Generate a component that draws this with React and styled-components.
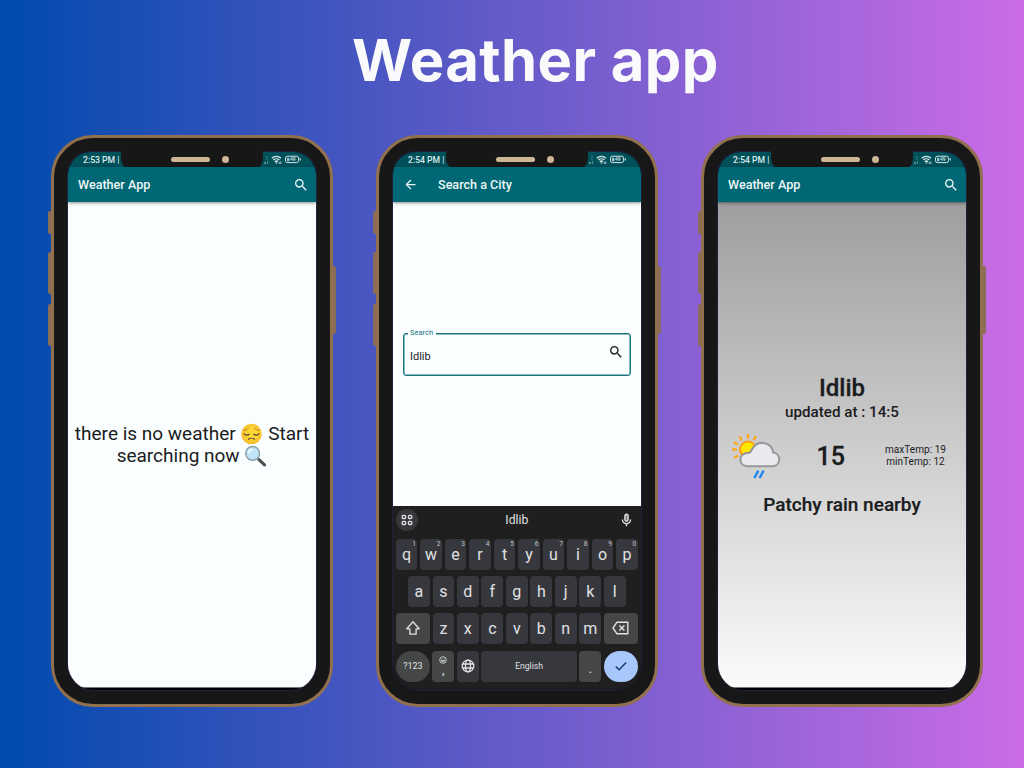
import React from "react";
import styled, { createGlobalStyle, css } from "styled-components";

const Global = createGlobalStyle`
  * { box-sizing: border-box; }
  body { margin: 0; }
`;

const Poster = styled.main`
  width: 1024px;
  height: 768px;
  overflow: hidden;
  background: linear-gradient(90deg, #004aad, #cb6ce6);
  font-family: Roboto, "Liberation Sans", sans-serif;
  color: #1b1c1d;
`;

const Title = styled.h1`
  margin: 0;
  height: 135px;
  padding: 24px 0 0 352px;
  font: 700 58px/73px Inter, "Liberation Sans", sans-serif;
  letter-spacing: 0.4px;
  color: #fafafc;
  white-space: nowrap;
`;

const Row = styled.div`
  display: flex;
  gap: 43px;
  padding-left: 51px;
`;

const Body = styled.section`
  position: relative;
  flex: none;
  width: 282px;
  height: 572px;
  padding: 14px;
  border: 3px solid #91704e;
  border-radius: 42px;
  background: #171717;
`;

const SideButton = styled.span`
  position: absolute;
  top: ${(p) => p.$top}px;
  ${(p) => p.$side}: -6px;
  width: 3px;
  height: ${(p) => p.$height}px;
  background: #8a6c58;
  border-radius: ${(p) => (p.$side === "left" ? "2px 0 0 2px" : "0 2px 2px 0")};
`;

const Screen = styled.div`
  display: flex;
  flex-direction: column;
  width: 248px;
  height: 538px;
  border-radius: 23px 23px 26px 26px;
  overflow: hidden;
  background: #000;
  box-shadow: 0 0 0 1px #221f3c;
`;

const Notch = styled.div`
  position: absolute;
  top: 13px;
  left: 67px;
  width: 142px;
  height: 20px;
  border-radius: 0 0 13px 13px;
  background: #171717;
  display: flex;
  align-items: center;
  padding: 0 0 4px 50px;
  gap: 12px;
`;

const Speaker = styled.span`
  width: 39px;
  height: 5px;
  border-radius: 3px;
  background: #ceb797;
`;

const Camera = styled.span`
  width: 7px;
  height: 7px;
  border-radius: 50%;
  background: #ceb797;
`;

const StatusBar = styled.div`
  flex: none;
  display: flex;
  justify-content: space-between;
  align-items: center;
  height: 15px;
  padding: 1px 14px 0 15px;
  background: #00505a;
  color: #dcebec;
  font-size: 8.6px;
  font-weight: 500;
  line-height: 15px;
  svg { margin-top: -1px; }
`;

const AppBar = styled.header`
  flex: none;
  display: flex;
  align-items: center;
  height: 35px;
  padding: 0 7px 0 10px;
  background: #006874;
  color: #eef7f7;
  box-shadow: 0 1px 3px rgba(0, 0, 0, 0.45);
  z-index: 1;
`;

const BarTitle = styled.h2`
  flex: 1;
  margin: 0;
  padding-left: ${(p) => p.$indent || 0}px;
  font-size: 12.6px;
  font-weight: 500;
  line-height: 35px;
`;

const Content = styled.div`
  height: ${(p) => p.$height || 485}px;
  flex: none;
  display: flex;
  flex-direction: column;
  align-items: center;
  background: ${(p) => p.$fill || "#fafeff"};
  box-shadow: ${(p) => (p.$height ? "none" : "0 1px #777")};
`;

const Empty = styled.p`
  margin: 0;
  padding-top: 221px;
  font-size: 19px;
  line-height: 22px;
  text-align: center;
  white-space: nowrap;
  svg { vertical-align: -5px; }
`;

const Field = styled.fieldset`
  width: 228px;
  height: 47px;
  margin: 127px 0 0;
  padding: 0 7px 0 6px;
  border: 1.5px solid #1a767f;
  border-radius: 3px;
  box-shadow: inset 0 0 0 0.5px #1a767f;
`;

const Legend = styled.legend`
  padding: 0 3px 0 2px;
  margin-left: -2px;
  font-size: 7.5px;
  line-height: 8px;
  color: #1a767f;
  background: #fafeff;
`;

const FieldRow = styled.div`
  display: flex;
  justify-content: space-between;
  font-size: 11px;
  line-height: 40px;
  svg { margin-top: 7px; margin-right: -1px; }
`;

const Keyboard = styled.div`
  height: 184px;
  flex: none;
  background: #1f1f1f;
  padding: 0 3.2px 0 2.8px;
  color: #e0e1e4;
  display: flex;
  flex-direction: column;
`;

const Suggestions = styled.div`
  height: 33px;
  display: grid;
  grid-template-columns: 22px 1fr 22px;
  align-items: center;
  justify-items: center;
  padding: 0 0.5px 5px 0.5px;
  font-size: 12.2px;
`;

const Apps = styled.span`
  display: grid;
  place-items: center;
  width: 22px;
  height: 22px;
  border-radius: 50%;
  background: #37383d;
`;

const KeyRow = styled.div`
  display: flex;
  justify-content: center;
  gap: 2.8px;
  height: 31px;
  margin-bottom: 6.2px;
`;

const Key = styled.span`
  position: relative;
  flex: none;
  display: grid;
  place-items: center;
  width: ${(p) => p.$width || 21.7}px;
  height: 31px;
  padding-bottom: 1px;
  border-radius: ${(p) => (p.$round ? "17px" : "4px")};
  background: #37383d;
  font-size: ${(p) => p.$size || 16}px;
  ${(p) => p.$tone === "mod" && css`background: #444746;`}
  ${(p) => p.$tone === "enter" && css`background: #a8c7fa; color: #10396f;`}
`;

const Hint = styled.small`
  position: absolute;
  top: 1px;
  right: 1.5px;
  font-size: 6.6px;
  line-height: 8px;
  color: #c5c6ca;
`;

const Dot = styled.span`
  padding-top: 5px;
`;

const CommaKey = styled(Key)`
  align-content: start;
  padding-top: 5px;
  line-height: 12px;
  gap: 0;
`;

const City = styled.div`
  padding-top: 171px;
  font-size: 24px;
  font-weight: 500;
  line-height: 30px;
  -webkit-text-stroke: 0.3px currentColor;
`;

const Updated = styled.div`
  font-size: 15.2px;
  font-weight: 500;
  line-height: 18px;
`;

const Reading = styled.div`
  width: 248px;
  height: 66px;
  margin-top: 2px;
  padding: 0 20px 0 13.5px;
  display: grid;
  grid-template-columns: 52px 1fr auto;
  align-items: center;
  > svg { margin-top: 3px; }
`;

const Degrees = styled.div`
  padding-left: 33px;
  font-size: 25px;
  font-weight: 500;
  -webkit-text-stroke: 0.3px currentColor;
`;

const Range = styled.div`
  font-size: 10px;
  line-height: 12px;
  text-align: center;
  letter-spacing: 0.05px;
`;

const Condition = styled.div`
  font-size: 19px;
  font-weight: 500;
  line-height: 32px;
  -webkit-text-stroke: 0.2px currentColor;
`;

const SearchIcon = ({ size = 16 }) => (
  <svg width={size} height={size} viewBox="0 0 24 24" fill="currentColor">
    <path d="M15.5 14h-.79l-.28-.27A6.47 6.47 0 0 0 16 9.5 6.5 6.5 0 1 0 9.5 16c1.61 0 3.09-.59 4.23-1.57l.27.28v.79l5 4.99L20.49 19zm-6 0C7.01 14 5 11.99 5 9.5S7.01 5 9.5 5 14 7.01 14 9.5 11.99 14 9.5 14z" />
  </svg>
);

const BackIcon = () => (
  <svg width="15" height="15" viewBox="0 0 24 24" fill="currentColor">
    <path d="M20 11H7.83l5.59-5.59L12 4l-8 8 8 8 1.41-1.41L7.83 13H20z" />
  </svg>
);

const StatusIcons = () => (
  <svg width="40" height="11" viewBox="0 0 40 11" fill="none" stroke="#d5e6e7">
    <g stroke="#6f9da3" strokeWidth=".8">
      <path d="M5 2v2M5 5v1M2 8l2 2M4 8l-2 2M5.5 7v3" />
    </g>
    <path d="M9.8 4.2a6.5 6.5 0 0 1 9.2 0M11.4 6a4.3 4.3 0 0 1 6 0M12.8 7.7a2.4 2.4 0 0 1 3.2 0" strokeWidth="1.3" />
    <circle cx="14.4" cy="9" r=".8" fill="#d5e6e7" stroke="none" />
    <path d="M17.3 8v2M18.8 7.4v2.6" strokeWidth=".8" />
    <rect x="23.5" y="2.2" width="13" height="6.4" rx="2" strokeWidth="1" />
    <path d="M38.2 4.2v2.4" strokeWidth="1.2" />
    <rect x="25" y="3.8" width="2.4" height="3.4" fill="#a9c8cb" stroke="none" />
    <text x="28" y="7.2" fontSize="5" fontWeight="500" fill="#d5e6e7" stroke="none">49</text>
  </svg>
);

const Pensive = () => (
  <svg width="23" height="22" viewBox="0 0 23 22">
    <defs>
      <radialGradient id="face" cx=".5" cy=".45" r=".55">
        <stop offset=".4" stopColor="#fdd835" />
        <stop offset="1" stopColor="#f5b82d" />
      </radialGradient>
    </defs>
    <circle cx="11.5" cy="11" r="10.3" fill="url(#face)" />
    <g fill="none" stroke="#513d35" strokeLinecap="round">
      <path d="M4.2 10.8c1.3 1.7 3.8 1.7 5 .3M13.8 11.1c1.2 1.4 3.7 1.4 5-.3" strokeWidth="1.2" />
      <path d="M4 7.3c1.7-.1 3.4-.8 4.5-2M14.5 5.3c1.1 1.2 2.8 1.9 4.5 2" stroke="#a87722" strokeWidth=".9" />
      <path d="M8.5 16.2c1.6-1.3 4.4-1.3 6 0" strokeWidth="1.2" />
    </g>
  </svg>
);

const Magnifier = () => (
  <svg width="23" height="22" viewBox="0 0 23 22">
    <path d="m12.8 12.7 3 3" stroke="#85939a" strokeWidth="2" />
    <path d="m15.2 14.8 5.3 5" stroke="#4b5052" strokeWidth="3.2" strokeLinecap="round" />
    <circle cx="8.6" cy="8.4" r="6.9" fill="#bfe5f6" stroke="#8ba0aa" strokeWidth="1.5" />
    <path d="M4.8 7.5c.4-1.7 1.5-2.8 3.2-3" stroke="#f2fcff" strokeWidth="1.6" fill="none" strokeLinecap="round" />
  </svg>
);

const SunCloud = () => (
  <svg width="52" height="50" viewBox="0 0 52 50" fill="none">
    <circle cx="16" cy="16.5" r="8" fill="#ffe800" stroke="#ff9f0f" strokeWidth="2" />
    <path d="M15.9 1v4.7M7.4 3.5l2.2 4M23.9 3.1l-2.2 4M1.8 9.2l4 2.4M.2 16.5h4.6M2.2 24.7l3.8-2.3" stroke="#ffa61a" strokeWidth="2.3" />
    <path d="M14.8 33.2a6.6 6.6 0 0 1-.9-13.1c1-.1 1.9-.2 2.6 0 2.4-.3 2.9-3 4.2-5A11.3 11.3 0 0 1 41.3 19.5a6.9 6.9 0 0 1-.3 13.7z" fill="#e9eaed" stroke="#98989d" strokeWidth="2.1" />
    <path d="m26.3 37.6-4 7.4M31.6 37.6l-4 7.4" stroke="#1e88ed" strokeWidth="2.5" />
  </svg>
);

const AppsIcon = () => (
  <svg width="12" height="12" viewBox="0 0 12 12" fill="none" stroke="currentColor" strokeWidth="1.3">
    <rect x="1.2" y="1.3" width="3.4" height="3.2" rx="1" />
    <rect x="7.4" y="1.3" width="3.4" height="3.2" rx="1" />
    <rect x="1.2" y="7.3" width="3.4" height="3.2" rx="1" />
    <rect x="7.4" y="7.3" width="3.4" height="3.2" rx="1" />
  </svg>
);

const MicIcon = () => (
  <svg width="11" height="14" viewBox="0 0 11 14" fill="none" stroke="currentColor" strokeWidth="1.4">
    <rect x="3.9" y="1.2" width="3.2" height="7" rx="1.6" fill="#77787b" />
    <path d="M1.4 6.5a4.1 4.1 0 0 0 8.2 0M5.5 10.5v2.7" />
  </svg>
);

const ShiftIcon = () => (
  <svg width="16" height="16" viewBox="0 0 16 16" fill="none" stroke="currentColor" strokeWidth="1.3" strokeLinejoin="round">
    <path d="M8 1.8 1.8 8.8h3.1v5.4h6.2V8.8h3.1z" />
  </svg>
);

const DeleteIcon = () => (
  <svg width="17" height="14" viewBox="0 0 17 14" fill="none" stroke="currentColor" strokeWidth="1.4">
    <path d="M5 1.2h10.8v11.6H5L1 7z" strokeLinejoin="round" />
    <path d="m7.4 4.4 5 5.2m0-5.2-5 5.2" />
  </svg>
);

const GlobeIcon = () => (
  <svg width="14" height="14" viewBox="0 0 14 14" fill="none" stroke="currentColor" strokeWidth="1.3">
    <circle cx="7" cy="7" r="5.8" />
    <ellipse cx="7" cy="7" rx="2.5" ry="5.8" />
    <path d="M1.6 5h10.8M1.6 9h10.8" />
  </svg>
);

const SmileIcon = () => (
  <svg width="8" height="8" viewBox="0 0 8 8" fill="none" stroke="currentColor" strokeWidth=".8">
    <circle cx="4" cy="4" r="3.3" />
    <path d="M2.1 4.4a2 2 0 0 0 3.8 0zM2.8 2.5v.8M5.2 2.5v.8" />
  </svg>
);

const CheckIcon = () => (
  <svg width="14" height="12" viewBox="0 0 14 12" fill="none" stroke="currentColor" strokeWidth="1.4">
    <path d="m1.8 6.4 3.3 3.3 7-7.3" />
  </svg>
);

const Phone = ({ time, bar, children }) => (
  <Body>
    <SideButton $side="left" $top={73} $height={23} />
    <SideButton $side="left" $top={114} $height={42} />
    <SideButton $side="left" $top={166} $height={42} />
    <SideButton $side="right" $top={128} $height={68} />
    <Screen>
      <StatusBar>
        <span>{time} |</span>
        <StatusIcons />
      </StatusBar>
      <AppBar>{bar}</AppBar>
      {children}
    </Screen>
    <Notch>
      <Speaker />
      <Camera />
    </Notch>
  </Body>
);

const homeBar = (
  <>
    <BarTitle>Weather App</BarTitle>
    <SearchIcon />
  </>
);

const searchBar = (
  <>
    <BackIcon />
    <BarTitle $indent={20}>Search a City</BarTitle>
  </>
);

export default function App() {
  return (
    <>
      <Global />
      <Poster>
        <Title>Weather app</Title>
        <Row>
          <Phone time="2:53 PM" bar={homeBar}>
            <Content>
              <Empty>
                there is no weather <Pensive /> Start
                <br />
                searching now <Magnifier />
              </Empty>
            </Content>
          </Phone>
          <Phone time="2:54 PM" bar={searchBar}>
            <Content $height={304}>
              <Field>
                <Legend>Search</Legend>
                <FieldRow>
                  <span>Idlib</span>
                  <SearchIcon />
                </FieldRow>
              </Field>
            </Content>
            <Keyboard>
              <Suggestions>
                <Apps><AppsIcon /></Apps>
                <span>Idlib</span>
                <MicIcon />
              </Suggestions>
              <KeyRow>
                {[..."qwertyuiop"].map((letter, i) => (
                  <Key key={letter}>
                    {letter}
                    <Hint>{(i + 1) % 10}</Hint>
                  </Key>
                ))}
              </KeyRow>
              <KeyRow>
                {[..."asdfghjkl"].map((letter) => <Key key={letter}>{letter}</Key>)}
              </KeyRow>
              <KeyRow>
                <Key $width={33.7} $tone="mod"><ShiftIcon /></Key>
                {[..."zxcvbnm"].map((letter) => <Key key={letter}>{letter}</Key>)}
                <Key $width={33.7} $tone="mod"><DeleteIcon /></Key>
              </KeyRow>
              <KeyRow>
                <Key $width={33.7} $tone="mod" $round $size={9}>?123</Key>
                <CommaKey $tone="mod" $size={13}><SmileIcon /><span>,</span></CommaKey>
                <Key><GlobeIcon /></Key>
                <Key $width={95.2} $size={8.6}>English</Key>
                <Key $tone="mod" $size={14}><Dot>.</Dot></Key>
                <Key $width={33.7} $tone="enter" $round><CheckIcon /></Key>
              </KeyRow>
            </Keyboard>
          </Phone>
          <Phone time="2:54 PM" bar={homeBar}>
            <Content $fill="linear-gradient(#9e9e9e, #fbfbfb)">
              <City>Idlib</City>
              <Updated>updated at : 14:5</Updated>
              <Reading>
                <SunCloud />
                <Degrees>15</Degrees>
                <Range>maxTemp: 19<br />minTemp: 12</Range>
              </Reading>
              <Condition>Patchy rain nearby</Condition>
            </Content>
          </Phone>
        </Row>
      </Poster>
    </>
  );
}
